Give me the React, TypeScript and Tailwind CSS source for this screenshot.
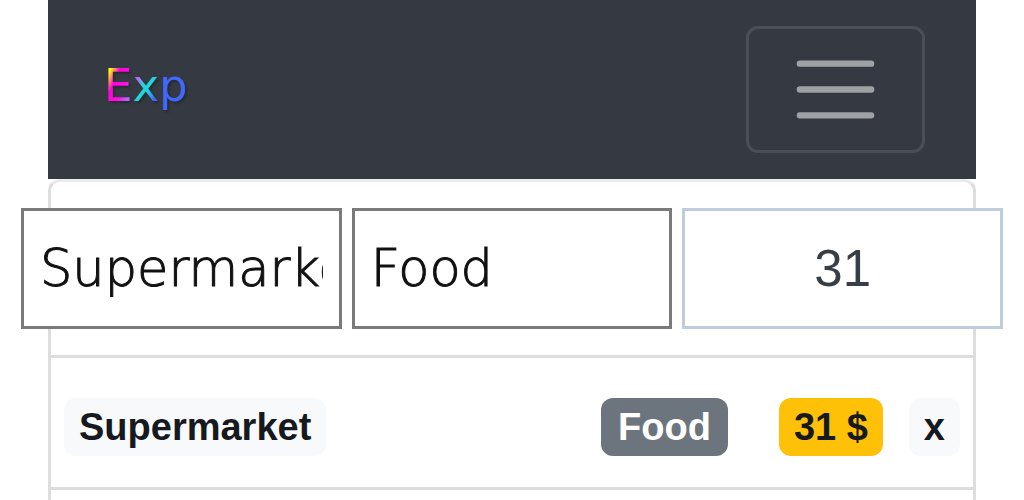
import { useState } from "react";

type Expense = { id: number; name: string; category: string; amount: number };

const fieldClass =
  "h-[121px] w-full min-w-0 rounded-none border-[3px] bg-white px-4 text-[51px] outline-none";

const textFieldClass =
  "border-[#7a7a7a] font-['DejaVu_Sans_Light','DejaVu_Sans',sans-serif] font-extralight text-[#111111] [-webkit-text-stroke:1px_#111111]";

const badgeClass =
  "inline-flex h-[58px] items-center rounded-xl text-[38px] font-bold whitespace-nowrap";

function Navbar() {
  return (
    <nav className="flex items-center justify-between bg-[#353a42] py-[26px] pr-[51px] pl-14">
      <a href="#" className="pb-2 drop-shadow-[2px_2px_1px_#282a2e]">
        <span className="block bg-[linear-gradient(115deg,#ffff00_10px,#ff00e0_19px,#ff10e8_30px,#b070ff_39px,#20d8d8_47px,#20d0e0_54px,#4068ff_62px)] bg-clip-text font-['DejaVu_Sans',sans-serif] text-[45px] leading-[54px] text-transparent">
          Exp
        </span>
      </a>
      <button
        type="button"
        aria-label="Toggle navigation"
        className="rounded-xl border-[3px] border-[#4a4f57] px-[38px] py-3"
      >
        <svg
          viewBox="0 0 30 30"
          className="size-[97px]"
          fill="none"
          stroke="#9fa2a5"
          strokeWidth="2"
          strokeLinecap="round"
        >
          <path d="M4 7h22M4 15h22M4 23h22" />
        </svg>
      </button>
    </nav>
  );
}

export default function App() {
  const [name, setName] = useState("Supermarket");
  const [category, setCategory] = useState("Food");
  const [amount, setAmount] = useState("31");
  const [expenses, setExpenses] = useState<Expense[]>([
    { id: 1, name: "Supermarket", category: "Food", amount: 31 },
  ]);

  return (
    <div className="flex min-h-screen flex-col bg-white px-12 font-['Liberation_Sans',Arial,sans-serif] text-[#16191d]">
      <Navbar />
      <ul className="flex-1 rounded-t-xl border-x-[3px] border-t-[3px] border-[#dddddd] border-t-[#ebebeb]">
        <li className="border-b-[3px] border-[#dddddd] pt-[26px] pb-[26px]">
          <form className="-mx-[30px] grid grid-cols-3 gap-[10px]" onSubmit={(e) => e.preventDefault()}>
            <input
              aria-label="Name"
              value={name}
              onChange={(e) => setName(e.target.value)}
              className={`${fieldClass} ${textFieldClass}`}
            />
            <input
              aria-label="Category"
              value={category}
              onChange={(e) => setCategory(e.target.value)}
              className={`${fieldClass} ${textFieldClass}`}
            />
            <input
              aria-label="Amount"
              inputMode="numeric"
              value={amount}
              onChange={(e) => setAmount(e.target.value)}
              className={`${fieldClass} border-[#bfccdc] text-center text-[#383e46]`}
            />
          </form>
        </li>
        {expenses.map((item) => (
          <li
            key={item.id}
            className="flex items-center border-b-[3px] border-[#dddddd] px-[13px] pt-10 pb-[31px]"
          >
            <span className={`${badgeClass} mr-auto bg-[#f8f9fa] px-[15px]`}>{item.name}</span>
            <span className={`${badgeClass} mr-[51px] bg-[#6c757d] px-[17px] text-white`}>{item.category}</span>
            <span className={`${badgeClass} mr-[26px] bg-[#ffc107] px-[15px]`}>{item.amount} $</span>
            <button
              type="button"
              aria-label={`Remove ${item.name}`}
              onClick={() => setExpenses(expenses.filter((e) => e.id !== item.id))}
              className={`${badgeClass} bg-[#f8f9fa] px-[15px]`}
            >
              x
            </button>
          </li>
        ))}
      </ul>
    </div>
  );
}
